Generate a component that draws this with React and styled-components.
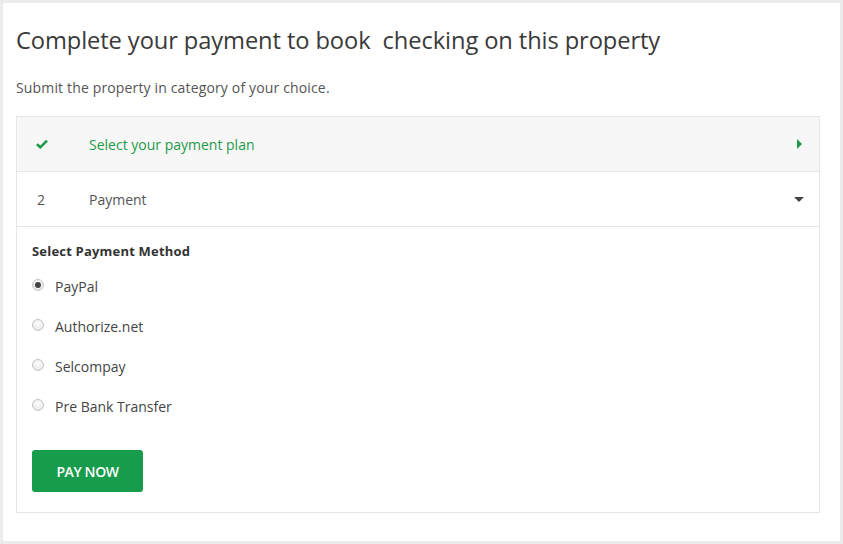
import React, { useState } from "react";
import styled, { createGlobalStyle } from "styled-components";

const GlobalStyle = createGlobalStyle`
  html, body {
    margin: 0;
    padding: 0;
    background: #ececec;
  }
  body {
    font-family: "Open Sans", "Liberation Sans", sans-serif;
  }
`;

const methods = ["PayPal", "Authorize.net", "Selcompay", "Pre Bank Transfer"];

const CheckIcon = () => (
  <svg width="12" height="10" viewBox="0 0 12 10">
    <path d="M1 5.2 L4.3 8.3 L11 1.6" fill="none" stroke="#1f9a4a" strokeWidth="2.6" />
  </svg>
);

const App = () => {
  const [method, setMethod] = useState("PayPal");

  return (
    <Page>
      <GlobalStyle />
      <Card>
        <Title>Complete your payment to book&nbsp; checking on this property</Title>
        <Subtitle>Submit the property in category of your choice.</Subtitle>

        <Steps>
          <StepRow $done>
            <StepMark>
              <CheckIcon />
            </StepMark>
            <StepLabel $done>Select your payment plan</StepLabel>
            <Caret $dir="right" />
          </StepRow>
          <StepRow>
            <StepMark $num>2</StepMark>
            <StepLabel>Payment</StepLabel>
            <Caret $dir="down" />
          </StepRow>

          <StepBody>
            <MethodTitle>Select Payment Method</MethodTitle>
            <MethodList>
              {methods.map((m) => (
                <MethodOption key={m}>
                  <Radio
                    type="radio"
                    name="method"
                    checked={method === m}
                    onChange={() => setMethod(m)}
                  />
                  <span>{m}</span>
                </MethodOption>
              ))}
            </MethodList>
            <PayButton>PAY NOW</PayButton>
          </StepBody>
        </Steps>
      </Card>
    </Page>
  );
};

export default App;

const Page = styled.div`
  padding: 3px;
  width: 843px;
  height: 544px;
  box-sizing: border-box;
`;

const Card = styled.div`
  background: #fff;
  height: 538px;
  width: 837px;
  box-sizing: border-box;
  padding: 21px 20px 0 13px;
`;

const Title = styled.h1`
  margin: 0;
  font-family: "Open Sans", sans-serif;
  font-weight: 400;
  font-size: 23.7px;
  line-height: 32px;
  color: #3a3a3a;
  letter-spacing: -0.1px;
`;

const Subtitle = styled.p`
  margin: 22px 0 0;
  font-size: 14px;
  line-height: 20px;
  color: #555;
  letter-spacing: 0.15px;
`;

const Steps = styled.div`
  margin-top: 18px;
  border: 1px solid #e6e6e6;
`;

const StepRow = styled.div`
  display: flex;
  align-items: center;
  height: 54px;
  background: ${(p) => (p.$done ? "#f7f7f7" : "#fff")};
  border-bottom: 1px solid #e6e6e6;
  padding: 0 15px 0 19px;
`;

const StepMark = styled.div`
  width: 53px;
  padding-left: ${(p) => (p.$num ? "1px" : "0")};
  box-sizing: border-box;
  font-size: 14px;
  color: #555;
  display: flex;
  align-items: center;
`;

const StepLabel = styled.div`
  flex: 1;
  font-size: 14px;
  color: ${(p) => (p.$done ? "#1f9a4a" : "#555")};
`;

const Caret = styled.span`
  width: 0;
  height: 0;
  ${(p) =>
    p.$dir === "right"
      ? `border-top: 5px solid transparent;
         border-bottom: 5px solid transparent;
         border-left: 5px solid #1f9a4a;
         margin-right: 2px;`
      : `border-left: 5px solid transparent;
         border-right: 5px solid transparent;
         border-top: 5px solid #444;`}
`;

const StepBody = styled.div`
  padding: 15px 15px 20px;
  height: 285px;
  box-sizing: border-box;
`;

const MethodTitle = styled.div`
  font-size: 13px;
  font-weight: 700;
  color: #333;
  letter-spacing: 0.2px;
`;

const MethodList = styled.div`
  display: flex;
  flex-direction: column;
  gap: 19px;
  margin-top: 16px;
`;

const MethodOption = styled.label`
  display: flex;
  align-items: center;
  gap: 11px;
  font-size: 14px;
  color: #444;
  height: 21px;
`;

const Radio = styled.input`
  appearance: none;
  margin: -3px 0 0 0;
  width: 12px;
  height: 12px;
  border-radius: 50%;
  border: 1px solid #c4c4c4;
  background: radial-gradient(circle at 50% 35%, #fdfdfd 0%, #e4e4e4 100%);
  box-sizing: border-box;
  position: relative;

  &:checked::after {
    content: "";
    position: absolute;
    top: 2px;
    left: 2px;
    width: 6px;
    height: 6px;
    border-radius: 50%;
    background: #444;
  }
`;

const PayButton = styled.button`
  margin-top: 33px;
  width: 111px;
  height: 42px;
  border: none;
  border-radius: 3px;
  background: #179c4b;
  color: #fff;
  font-family: "Open Sans", sans-serif;
  font-size: 14px;
  font-weight: 600;
  letter-spacing: -0.4px;
  cursor: pointer;
`;
